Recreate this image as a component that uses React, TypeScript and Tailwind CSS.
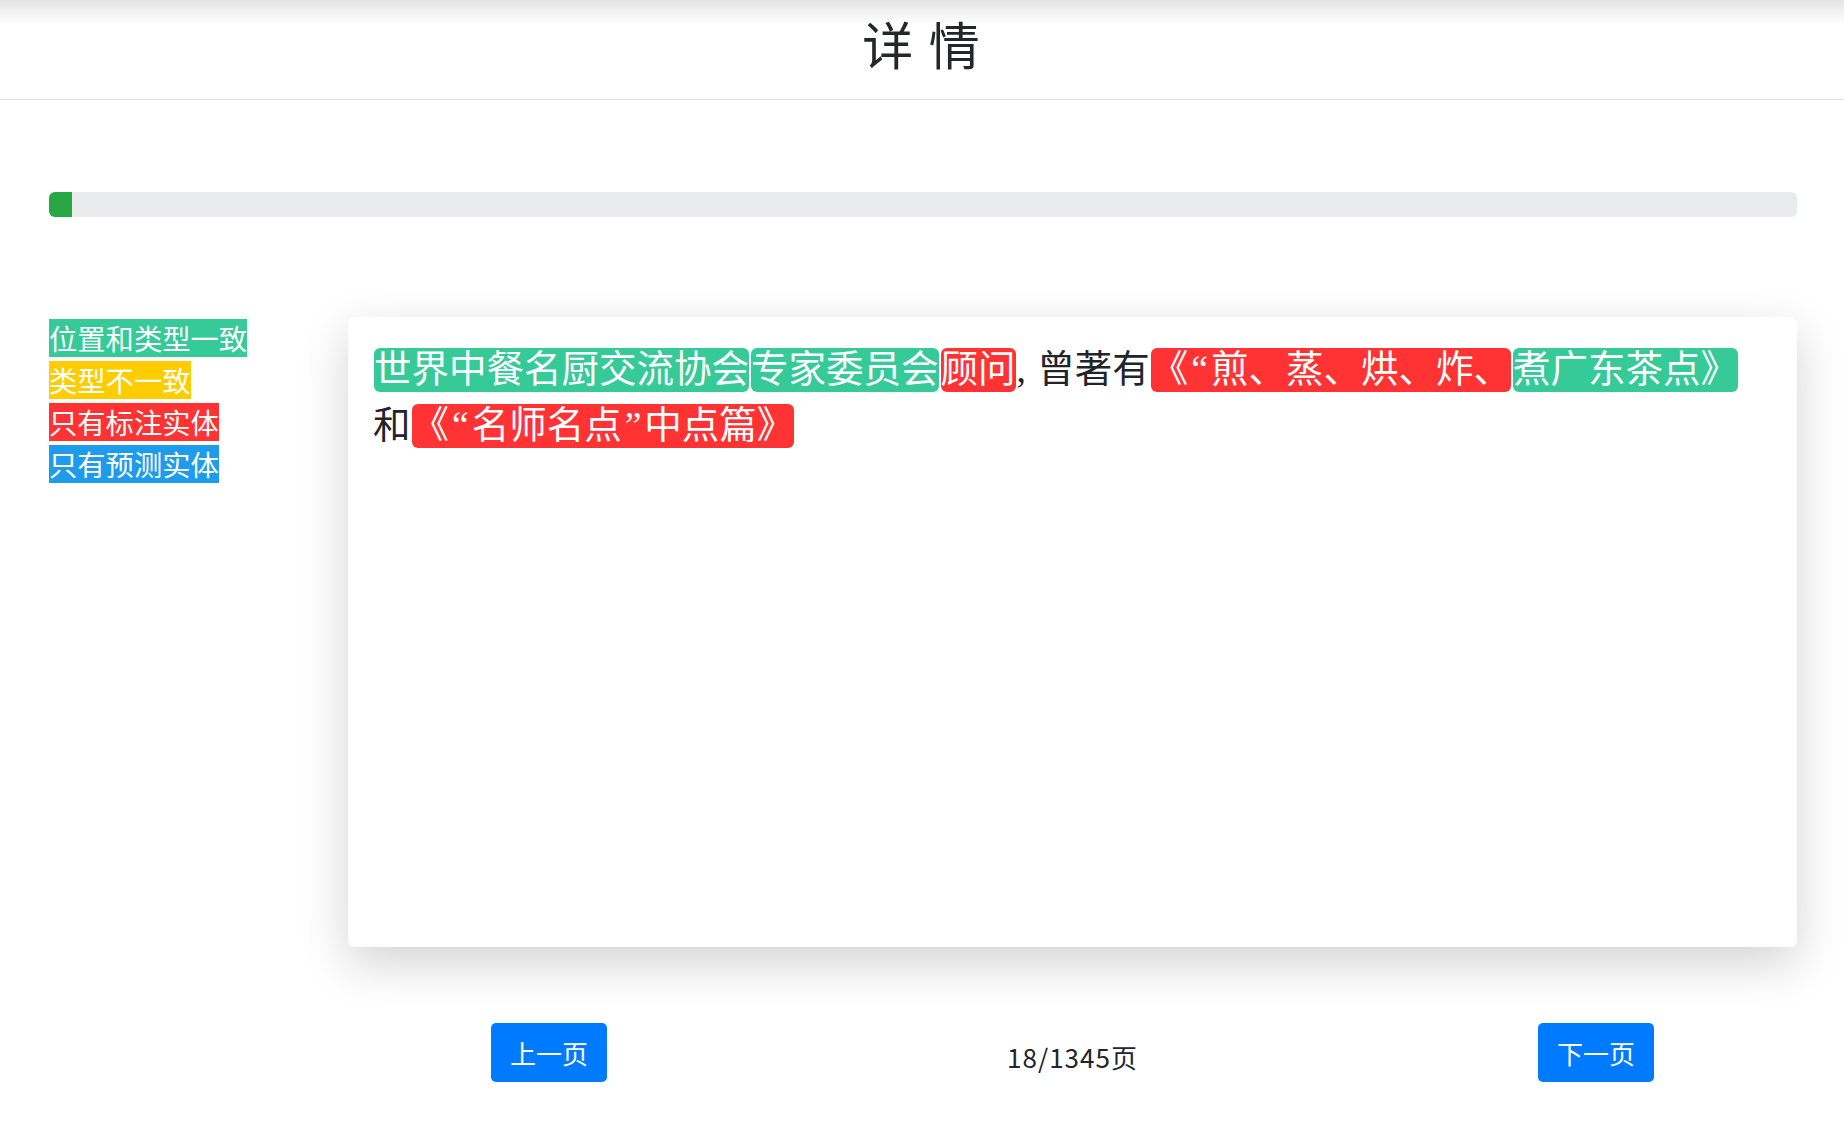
import React from 'react';

const legend = [
  { label: '位置和类型一致', color: 'bg-[#35ca97]' },
  { label: '类型不一致', color: 'bg-[#ffcc00]' },
  { label: '只有标注实体', color: 'bg-[#ff3333]' },
  { label: '只有预测实体', color: 'bg-[#1f9bec]' },
];

function Mark({ children, color }: { children: React.ReactNode; color: string }) {
  return (
    <span className={`inline-block h-[44px] leading-[44px] mx-px rounded-[6px] text-white ${color}`}>
      {children}
    </span>
  );
}

// quotes in the source font are a bit wider than Liberation Serif's
function Q({ children }: { children: React.ReactNode }) {
  return <span className="mx-[3px]">{children}</span>;
}

export default function App() {
  const page = 18;
  const total = 1345;

  return (
    <div className="min-h-screen bg-white text-[#212529] font-['Noto_Sans_CJK_SC',sans-serif]">
      {/* header */}
      <header className="h-[100px] pb-[12px] flex items-center justify-center border-b border-[#dee2e6] bg-[linear-gradient(to_bottom,#e4e4e4,#ffffff_24px)]">
        <h1 className="text-[51px] leading-none tracking-[2px] text-[#24262b]">详 情</h1>
      </header>

      <div className="pl-[49px] pr-[47px]">
        {/* progress */}
        <div className="mt-[92px] h-[25px] rounded-[6px] bg-[#e9ecef] overflow-hidden flex">
          <div className="h-full bg-[#28a745]" style={{ width: `${(page / total) * 100}%` }} />
        </div>

        <div className="mt-[100px] grid grid-cols-[299px_1fr]">
          {/* legend */}
          <div className="pt-[2px] flex flex-col items-start gap-[4px]">
            {legend.map((l) => (
              <span key={l.label} className={`inline-block text-[28.3px] leading-[38px] text-white ${l.color}`}>
                {l.label}
              </span>
            ))}
          </div>

          {/* text card */}
          <div>
            <div className="h-[630px] rounded-[6px] bg-white shadow-[0_16px_48px_rgba(0,0,0,0.175)] p-[25px]">
              <p className="text-[37.5px] leading-[56px] font-['Liberation_Serif','Noto_Sans_CJK_SC',serif] text-[#212529]">
                <Mark color="bg-[#35ca97]">世界中餐名厨交流协会</Mark>
                <Mark color="bg-[#35ca97]">专家委员会</Mark>
                <Mark color="bg-[#ff3333]">顾问</Mark>
                <span className="mr-[2px]">, </span>曾著有
                <Mark color="bg-[#ff3333]">《<Q>“</Q>煎、蒸、烘、炸、</Mark>
                <Mark color="bg-[#35ca97]">煮广东茶点》</Mark>
                和
                <Mark color="bg-[#ff3333]">《<Q>“</Q>名师名点<Q>”</Q>中点篇》</Mark>
              </p>
            </div>

            {/* pager */}
            <div className="mt-[76px] px-[143px] flex items-center justify-between">
              <button className="h-[59px] px-[19px] rounded-[5px] bg-[#007bff] text-white text-[26px]">
                上一页
              </button>
              <span className="text-[26px] tracking-[1px] pt-[8px] text-[#212529]">
                {page}/{total}页
              </span>
              <button className="h-[59px] px-[19px] rounded-[5px] bg-[#007bff] text-white text-[26px]">
                下一页
              </button>
            </div>
          </div>
        </div>
      </div>
    </div>
  );
}
